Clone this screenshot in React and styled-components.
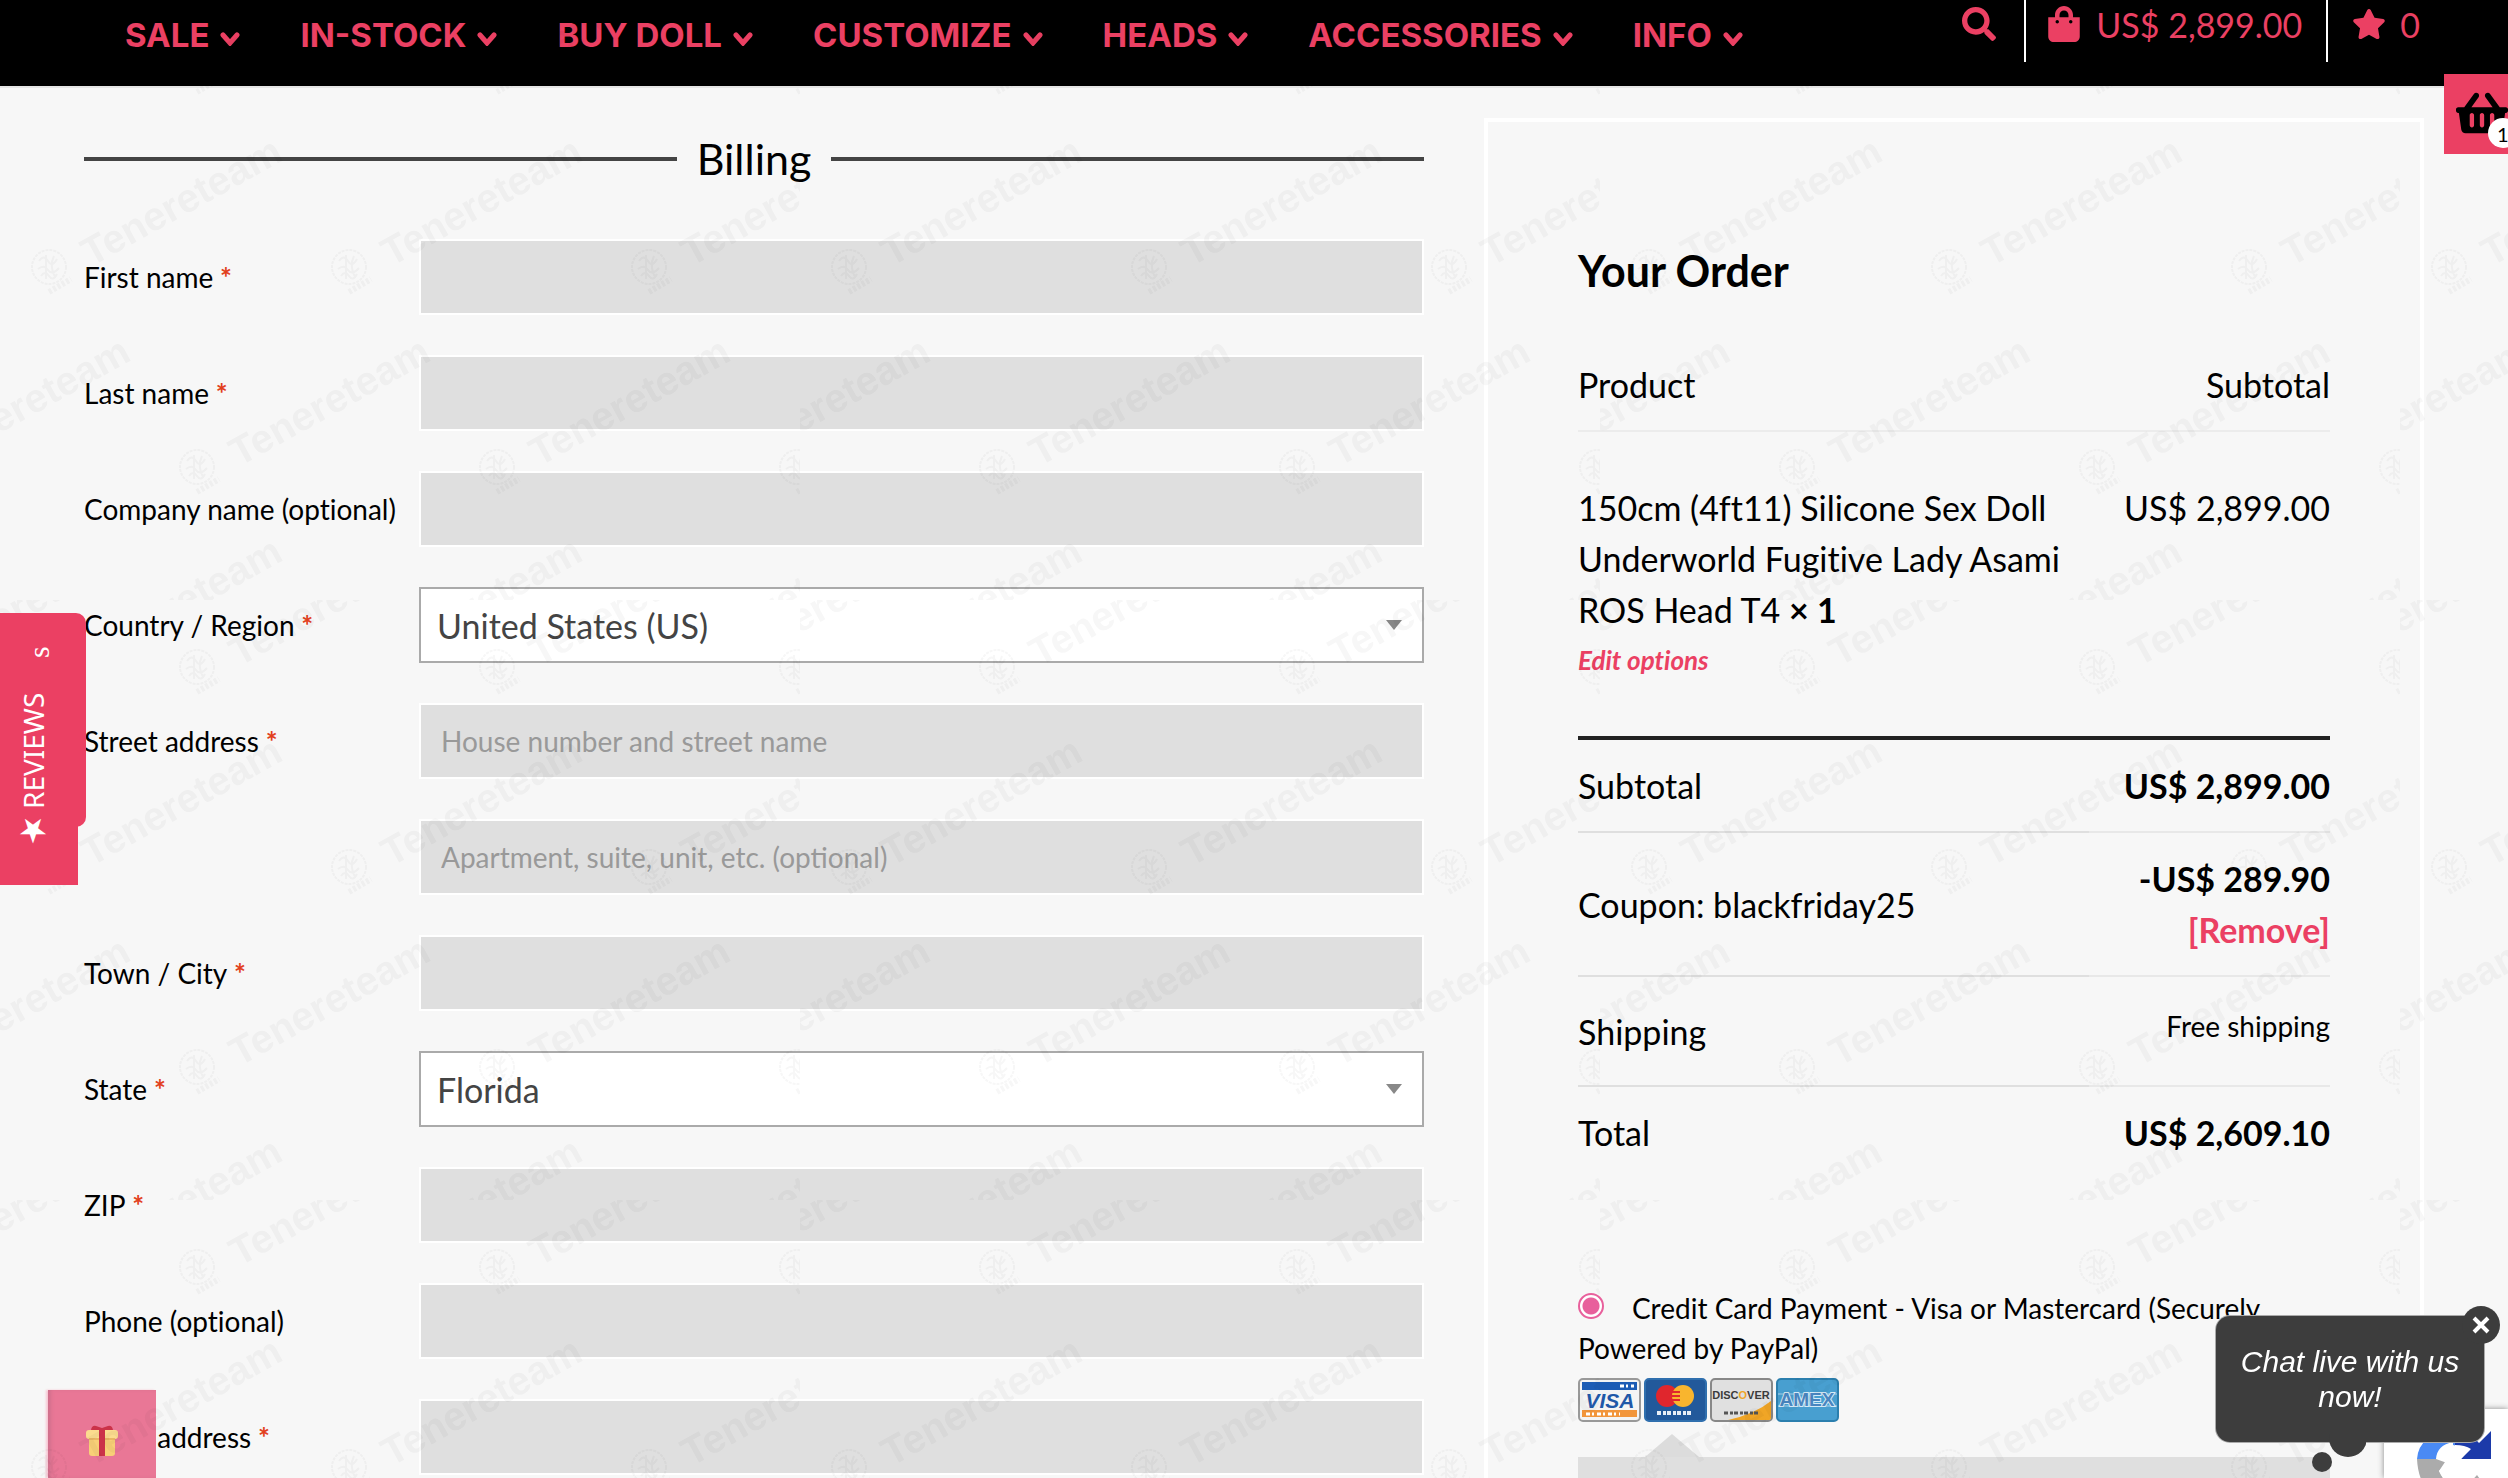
import React, {useState} from 'react';
import styled, {createGlobalStyle} from 'styled-components';
import {FaSearch, FaShoppingBag, FaShoppingBasket, FaStar} from 'react-icons/fa';

const pink = '#eb4063';
const sans = `Lato, "Noto Sans", sans-serif`;

const menu = ['SALE', 'IN-STOCK', 'BUY DOLL', 'CUSTOMIZE', 'HEADS', 'ACCESSORIES', 'INFO'];

const fields = [
  {id: 'first_name', label: 'First name', required: true},
  {id: 'last_name', label: 'Last name', required: true},
  {id: 'company', label: 'Company name (optional)'},
  {id: 'country', label: 'Country / Region', required: true, options: ['United States (US)', 'Canada', 'United Kingdom (UK)']},
  {id: 'address_1', label: 'Street address', required: true, placeholder: 'House number and street name'},
  {id: 'address_2', placeholder: 'Apartment, suite, unit, etc. (optional)'},
  {id: 'city', label: 'Town / City', required: true},
  {id: 'state', label: 'State', required: true, options: ['Florida', 'Georgia', 'Texas']},
  {id: 'zip', label: 'ZIP', required: true},
  {id: 'phone', label: 'Phone (optional)'},
  {id: 'email', label: 'Email address', required: true},
];

const Chevron = () => (
  <svg width="20" height="14" viewBox="0 0 20 14" aria-hidden="true">
    <path d="M3 3 L10 11 L17 3" fill="none" stroke="currentColor" strokeWidth="5" strokeLinecap="round"/>
  </svg>
);

// staggered rows, cut at the edges of every 800x600 tile
const marks = [
  [-103, 67], [197, 67], [497, 67], [797, 67],
  [49, 267], [349, 267], [649, 267],
  [-103, 467], [197, 467], [497, 467], [797, 467],
  [49, 667], [349, 667], [649, 667],
];

const WatermarkLayer = () => (
  <Watermark aria-hidden="true">
    <defs>
      <g id="seal" fill="none" stroke="#000">
        <circle r="17" strokeWidth="2" strokeDasharray="3 1"/>
        <path d="M-10 -6 q5 -7 9 0 t9 -2 M-11 2 q6 -5 10 1 t11 -2 M-8 9 q4 -6 8 0 t8 -2 M-3 -12 v24 M5 -11 q-5 10 1 21" strokeWidth="2"/>
        <path d="M0 25 L22 12" strokeWidth="6" strokeDasharray="3 2"/>
      </g>
      <pattern id="mark" width="800" height="600" patternUnits="userSpaceOnUse">
        {marks.map(([x, y]) => (
          <g key={`${x}-${y}`} transform={`translate(${x} ${y})`}>
            <use href="#seal"/>
            <text transform="translate(42 0) rotate(-29)">Tenereteam</text>
          </g>
        ))}
      </pattern>
    </defs>
    <rect width="100%" height="100%" fill="url(#mark)"/>
  </Watermark>
);

const Field = ({id, label, required, placeholder, options}) => (
  <Row>
    {label ? (
      <Label htmlFor={id}>
        {label}
        {required && <Required> *</Required>}
      </Label>
    ) : <span/>}
    {options ? (
      <SelectBox>
        <Select id={id}>
          {options.map((option) => <option key={option}>{option}</option>)}
        </Select>
        <svg width="16" height="10" viewBox="0 0 16 10" aria-hidden="true">
          <path d="M0 0 H16 L8 10 Z" fill="#888"/>
        </svg>
      </SelectBox>
    ) : (
      <Input id={id} placeholder={placeholder} aria-label={label ? undefined : placeholder}/>
    )}
  </Row>
);

const CardIcons = () => (
  <Cards>
    <svg width="63" height="44" viewBox="0 0 63 44" role="img" aria-label="Visa">
      <rect x="1" y="1" width="61" height="42" rx="4" fill="#f4f4f4" stroke="#999" strokeWidth="2"/>
      <rect x="4" y="4" width="55" height="8" fill="#1c5cb5"/>
      <rect x="4" y="32" width="55" height="7" fill="#f2953a"/>
      <text x="32" y="30" textAnchor="middle" fontSize="21" fontStyle="italic" fill="#1f58a8">VISA</text>
      <path d="M42 8 h14 M8 36 h34" stroke="#fff" strokeWidth="3" strokeDasharray="4 2 2 3"/>
    </svg>
    <svg width="63" height="44" viewBox="0 0 63 44" role="img" aria-label="Mastercard">
      <rect x="1" y="1" width="61" height="42" rx="4" fill="#22599b" stroke="#2f6fae" strokeWidth="2"/>
      <circle cx="23" cy="18" r="11" fill="#e0262d"/>
      <circle cx="39" cy="18" r="11" fill="#f9b52e"/>
      <path d="M28 14 h8 M27 18 h9 M28 22 h8" stroke="#e0262d" strokeWidth="2"/>
      <path d="M13 35 h36" stroke="#e8eef6" strokeWidth="4" strokeDasharray="4 2 3 1"/>
    </svg>
    <svg width="63" height="44" viewBox="0 0 63 44" role="img" aria-label="Discover">
      <rect x="1" y="1" width="61" height="42" rx="4" fill="#e0e0e0" stroke="#888" strokeWidth="2"/>
      <path d="M18 42 Q45 36 61 23 V40 Q61 42 58 42 Z" fill="#f0a526"/>
      <text x="31" y="21" textAnchor="middle" fontSize="11" fill="#3b3b3b">
        DISC<tspan fill="#f0a526">O</tspan>VER
      </text>
      <path d="M14 35 h34" stroke="#555" strokeWidth="3" strokeDasharray="4 2 3 1"/>
    </svg>
    <svg width="63" height="44" viewBox="0 0 63 44" role="img" aria-label="American Express">
      <rect x="1" y="1" width="61" height="42" rx="4" fill="#489fd0" stroke="#2b7fae" strokeWidth="2"/>
      <path d="M2 16 H61 M2 28 H61" stroke="#a9d3ec" strokeWidth="1"/>
      <text x="31" y="28" textAnchor="middle" fontSize="19" fill="#4a86c0" stroke="#d5eaf6" strokeWidth="2" paintOrder="stroke">AMEX</text>
    </svg>
  </Cards>
);

const App = () => {
  const [chatOpen, setChatOpen] = useState(true);

  return (
    <Page>
      <GlobalStyle/>
      <Header>
        <Nav>
          {menu.map((item) => (
            <MenuButton key={item} type="button">{item}<Chevron/></MenuButton>
          ))}
        </Nav>
        <Tools>
          <Tool href="#search" aria-label="Search"><FaSearch size={34}/></Tool>
          <Tool href="#cart" divided><FaShoppingBag size={36}/>US$ 2,899.00</Tool>
          <Tool href="#wishlist" divided><FaStar size={34}/>0</Tool>
        </Tools>
      </Header>

      <Main>
        <Billing>
          <SectionTitle>Billing</SectionTitle>
          {fields.map((field) => <Field key={field.id} {...field}/>)}
        </Billing>

        <Order>
          <OrderTitle>Your Order</OrderTitle>
          <OrderTable>
            <thead>
              <tr>
                <Cell as="th" scope="col">Product</Cell>
                <Cell as="th" scope="col" end>Subtotal</Cell>
              </tr>
            </thead>
            <tbody>
              <ItemRow>
                <Cell>
                  150cm (4ft11) Silicone Sex Doll Underworld Fugitive Lady Asami ROS Head T4 <Quantity>× 1</Quantity>
                  <EditLink href="#edit">Edit options</EditLink>
                </Cell>
                <Cell end>US$ 2,899.00</Cell>
              </ItemRow>
            </tbody>
            <tfoot>
              <tr>
                <Cell as="th" scope="row">Subtotal</Cell>
                <Cell end bold>US$ 2,899.00</Cell>
              </tr>
              <tr>
                <Cell as="th" scope="row">Coupon: blackfriday25</Cell>
                <Cell end bold>-US$ 289.90 <RemoveLink href="#remove">[Remove]</RemoveLink></Cell>
              </tr>
              <tr>
                <Cell as="th" scope="row">Shipping</Cell>
                <Cell end><Shipping>Free shipping</Shipping></Cell>
              </tr>
              <tr>
                <Cell as="th" scope="row">Total</Cell>
                <Cell end bold>US$ 2,609.10</Cell>
              </tr>
            </tfoot>
          </OrderTable>

          <Payment>
            <Radio type="radio" name="payment" id="card" defaultChecked/>
            <label htmlFor="card">Credit Card Payment - Visa or Mastercard (Securely Powered by PayPal)</label>
          </Payment>
          <CardIcons/>
          <PaymentArrow/>
          <PaymentBox/>
        </Order>
      </Main>

      <GiftButton type="button" aria-label="Gifts">
        <svg width="32" height="31" viewBox="0 0 32 31">
          <path d="M3 12 H29 V28 Q29 31 26 31 H6 Q3 31 3 28 Z" fill="#f8d077"/>
          <rect y="5" width="32" height="9" rx="3" fill="#fbdc8e"/>
          <path d="M3 13 H29 V15 H3 Z" fill="#eab765"/>
          <rect x="13" y="5" width="6" height="26" fill="#cb3349"/>
          <path d="M5 5 Q6 0 10 1 L16 3 L22 1 Q26 0 27 5 Z" fill="#cb3349"/>
        </svg>
      </GiftButton>

      <WatermarkLayer/>

      <RewardsTab type="button">s</RewardsTab>
      <ReviewsTab type="button"><Star>★</Star>REVIEWS</ReviewsTab>

      <BasketButton type="button" aria-label="Basket">
        <FaShoppingBasket size={52}/>
        <Badge>1</Badge>
      </BasketButton>

      <Recaptcha>
        <svg width="76" height="76" viewBox="0 0 76 76" aria-label="reCAPTCHA">
          <path d="M0 30 Q2 4 38 2 V18 L30 20 L20 30 Z" fill="#4a8af4"/>
          <path d="M38 2 Q54 3 62 14 L74 2 V30 H44 L54 20 Q48 16 38 16 Z" fill="#1c3aa9"/>
          <path d="M0 30 H30 L22 42 Q28 56 40 56 Q52 56 60 46 L70 60 Q56 74 38 72 Q2 70 0 30 Z" fill="#ababab"/>
          <path d="M19 30 Q20 16 36 13 V16 L52 20 L44 30 L40 34 L60 56 L44 46 L30 56 L22 42 L30 34 Z" fill="#fff"/>
        </svg>
      </Recaptcha>

      {chatOpen && (
        <Chat>
          Chat live with us now!
          <CloseChat type="button" aria-label="Close chat" onClick={() => setChatOpen(false)}>
            <svg width="20" height="20" viewBox="0 0 20 20">
              <path d="M3 3 L17 17 M17 3 L3 17" stroke="#fff" strokeWidth="4"/>
            </svg>
          </CloseChat>
          <ChatTail width="60" height="42" viewBox="0 0 60 42">
            <circle cx="42" cy="4" r="19"/>
            <circle cx="16" cy="28" r="10"/>
          </ChatTail>
        </Chat>
      )}
    </Page>
  );
};

export default App;

const GlobalStyle = createGlobalStyle`
  * {
    box-sizing: border-box;
    font-variant-ligatures: none;
  }

  body {
    margin: 0;
    background: #f7f7f7;
    color: #000;
    font-family: ${sans};
  }

  button {
    border: 0;
    cursor: pointer;
  }

  a {
    text-decoration: none;
  }
`;

const Page = styled.div`
  position: relative;
  display: flex;
  flex-direction: column;
  min-height: 100vh;
  overflow: hidden;
`;

const Watermark = styled.svg`
  position: absolute;
  inset: 0;
  width: 100%;
  height: 100%;
  opacity: 0.03;
  pointer-events: none;

  text {
    font: 700 40px "Liberation Sans", Arial, sans-serif;
  }
`;

const Header = styled.header`
  display: flex;
  justify-content: space-between;
  align-items: flex-start;
  height: 88px;
  padding: 0 84px 0 125px;
  background: #000;
  border-bottom: 2px solid #e6e6e6;
`;

const Nav = styled.nav`
  display: flex;
  gap: 60px;
`;

const MenuButton = styled.button`
  display: flex;
  align-items: center;
  gap: 11px;
  height: 70px;
  padding: 0;
  background: none;
  color: ${pink};
  font: 700 33px Inter, sans-serif;
  white-space: nowrap;

  svg {
    margin-top: 8px;
  }
`;

const Tools = styled.div`
  display: flex;
`;

const Tool = styled.a.withConfig({shouldForwardProp: (prop) => prop !== 'divided'})`
  display: flex;
  align-items: center;
  gap: 14px;
  height: 62px;
  padding: 0 ${({divided}) => (divided ? 24 : 28)}px 14px 20px;
  border-left: ${({divided}) => (divided ? '2px solid #fff' : '0')};
  color: ${pink};
  font-size: 34px;
  white-space: nowrap;

  &:last-child {
    padding-left: 24px;
    padding-right: 4px;
  }
`;

const Main = styled.main`
  flex: 1;
  display: grid;
  grid-template-columns: 1340fr 940fr;
  gap: 60px;
  padding: 30px 84px 0;
`;

const Billing = styled.form`
  padding-top: 11px;
`;

const SectionTitle = styled.h2`
  display: flex;
  align-items: center;
  gap: 20px;
  margin: 0 0 50px;
  font-size: 43px;
  font-weight: 400;
  line-height: 60px;

  &::before,
  &::after {
    content: '';
    flex: 1;
    height: 4px;
    background: #444;
  }
`;

const Row = styled.div`
  display: grid;
  grid-template-columns: 25% 1fr;
  align-items: center;
  margin-bottom: 40px;

  &:last-child {
    margin-bottom: 0;
  }
`;

const Label = styled.label`
  font-size: 28px;
  white-space: nowrap;
`;

const Required = styled.span`
  color: #e2401c;
  font-weight: 700;
`;

const Input = styled.input`
  width: 100%;
  height: 76px;
  padding: 0 20px;
  border: 2px solid #fff;
  border-radius: 0;
  background: #dfdfdf;
  font: 28px ${sans};

  &::placeholder {
    color: #999;
  }
`;

const SelectBox = styled.div`
  display: flex;
  align-items: center;
  height: 76px;
  padding-right: 20px;
  border: 2px solid #aaa;
  background: #fff;
`;

const Select = styled.select`
  flex: 1;
  height: 100%;
  padding: 0 16px;
  appearance: none;
  border: 0;
  background: none;
  color: #444;
  font: 34px ${sans};
`;

const Order = styled.section`
  display: flex;
  flex-direction: column;
  padding: 119px 90px 0;
  border: 4px solid #fff;
  border-bottom: 0;
`;

const OrderTitle = styled.h3`
  margin: 0 0 38px;
  font-size: 43px;
  font-weight: 700;
  line-height: 60px;
`;

const OrderTable = styled.table`
  width: 100%;
  margin-bottom: 110px;
  border-collapse: separate;
  border-spacing: 0;
  table-layout: fixed;
  font-size: 34px;
  line-height: 51px;

  tfoot tr:last-child > * {
    border-bottom: 0;
  }
`;

const Cell = styled.td.withConfig({shouldForwardProp: (prop) => !['end', 'bold'].includes(prop)})`
  width: ${({end}) => (end ? 32 : 68)}%;
  padding: 20px 0;
  border-bottom: 2px solid ${({end}) => (end ? '#e8e8e8' : '#dfdfdf')};
  font-weight: ${({bold}) => (bold ? 700 : 400)};
  text-align: ${({end}) => (end ? 'right' : 'left')};

  thead & {
    border-color: #ececec;
  }
`;

const ItemRow = styled.tr`
  vertical-align: top;

  ${Cell} {
    padding: 50px 0;
    border-bottom: 4px solid #222;
  }

  ${Cell}:first-child {
    padding-right: 20px;
  }
`;

const Quantity = styled.strong`
  white-space: nowrap;
`;

const EditLink = styled.a`
  display: block;
  color: ${pink};
  font-size: 26px;
  font-style: italic;
  font-weight: 700;
`;

const RemoveLink = styled.a`
  display: block;
  color: ${pink};
`;

const Shipping = styled.div`
  padding: 8px 0 18px;
  font-size: 28px;
  line-height: 42px;
`;

const Payment = styled.div`
  font-size: 28px;
  line-height: 40px;
`;

const Radio = styled.input`
  appearance: none;
  width: 26px;
  height: 26px;
  margin: 0 28px 0 0;
  border: 2px solid #e8609c;
  border-radius: 50%;
  background: radial-gradient(circle, #e8609c 8px, #fff 9px);
`;

const Cards = styled.div`
  display: flex;
  gap: 3px;
  margin-top: 10px;
  font-family: "Liberation Sans", Arial, sans-serif;
  font-weight: 700;
`;

const PaymentArrow = styled.div`
  width: 54px;
  height: 23px;
  margin: 12px 0 0 67px;
  background: #dcdcdc;
  clip-path: polygon(50% 0, 100% 100%, 0 100%);
`;

const PaymentBox = styled.div`
  flex: 1;
  min-height: 20px;
  background: #dfdfdf;
`;

const GiftButton = styled.button`
  position: fixed;
  left: 48px;
  bottom: 0;
  display: flex;
  justify-content: center;
  width: 108px;
  height: 88px;
  padding: 35px 0 0;
  background: #e97796;
  box-shadow: inset 4px 0 4px -2px #b0688099, -2px 0 2px #f7c6d3;
`;

// vertical text that reads from the bottom up
const SideTab = styled.button`
  position: fixed;
  left: 0;
  writing-mode: vertical-rl;
  rotate: 180deg;
  background: ${pink};
  color: #fff;
  text-align: left;
`;

const RewardsTab = styled(SideTab)`
  top: 613px;
  width: 86px;
  height: 214px;
  padding: 169px 0 0 8px;
  border-radius: 10px 0 0 10px;
  font: 30px "Liberation Serif", serif;
`;

const ReviewsTab = styled(SideTab)`
  top: 680px;
  width: 78px;
  height: 205px;
  padding: 34px 0 0 12px;
  font: 28px "Noto Sans", sans-serif;
`;

const Star = styled.span`
  margin-bottom: 2px;
  font: 34px "DejaVu Sans", sans-serif;
`;

const BasketButton = styled.button`
  position: fixed;
  top: 74px;
  right: 0;
  width: 64px;
  height: 80px;
  padding: 0 0 0 12px;
  background: ${pink};
  color: #000;
  overflow: hidden;
`;

const Badge = styled.span`
  position: absolute;
  top: 44px;
  left: 44px;
  width: 30px;
  height: 30px;
  padding-left: 9px;
  border-radius: 50%;
  background: #fff;
  font: 20px/32px ${sans};
  text-align: left;
`;

const Recaptcha = styled.aside`
  position: fixed;
  right: 0;
  bottom: 0;
  width: 124px;
  height: 69px;
  padding: 20px 0 0 33px;
  background: #fff;
  box-shadow: 0 0 6px #888;
  overflow: hidden;
`;

const Chat = styled.aside`
  position: fixed;
  right: 24px;
  bottom: 36px;
  width: 268px;
  height: 126px;
  padding: 28px 20px;
  border-radius: 14px;
  background: #3d3d3d;
  box-shadow: 0 0 0 1px #aaa;
  color: #fff;
  font: italic 30px/35px "Liberation Sans", Arial, sans-serif;
  text-align: center;
`;

const CloseChat = styled.button`
  position: absolute;
  top: -10px;
  right: -16px;
  display: flex;
  align-items: center;
  justify-content: center;
  width: 38px;
  height: 38px;
  padding: 0;
  border-radius: 50%;
  background: #3d3d3d;
`;

const ChatTail = styled.svg`
  position: absolute;
  top: 118px;
  left: 90px;
  z-index: -1;
  fill: #3d3d3d;
`;
